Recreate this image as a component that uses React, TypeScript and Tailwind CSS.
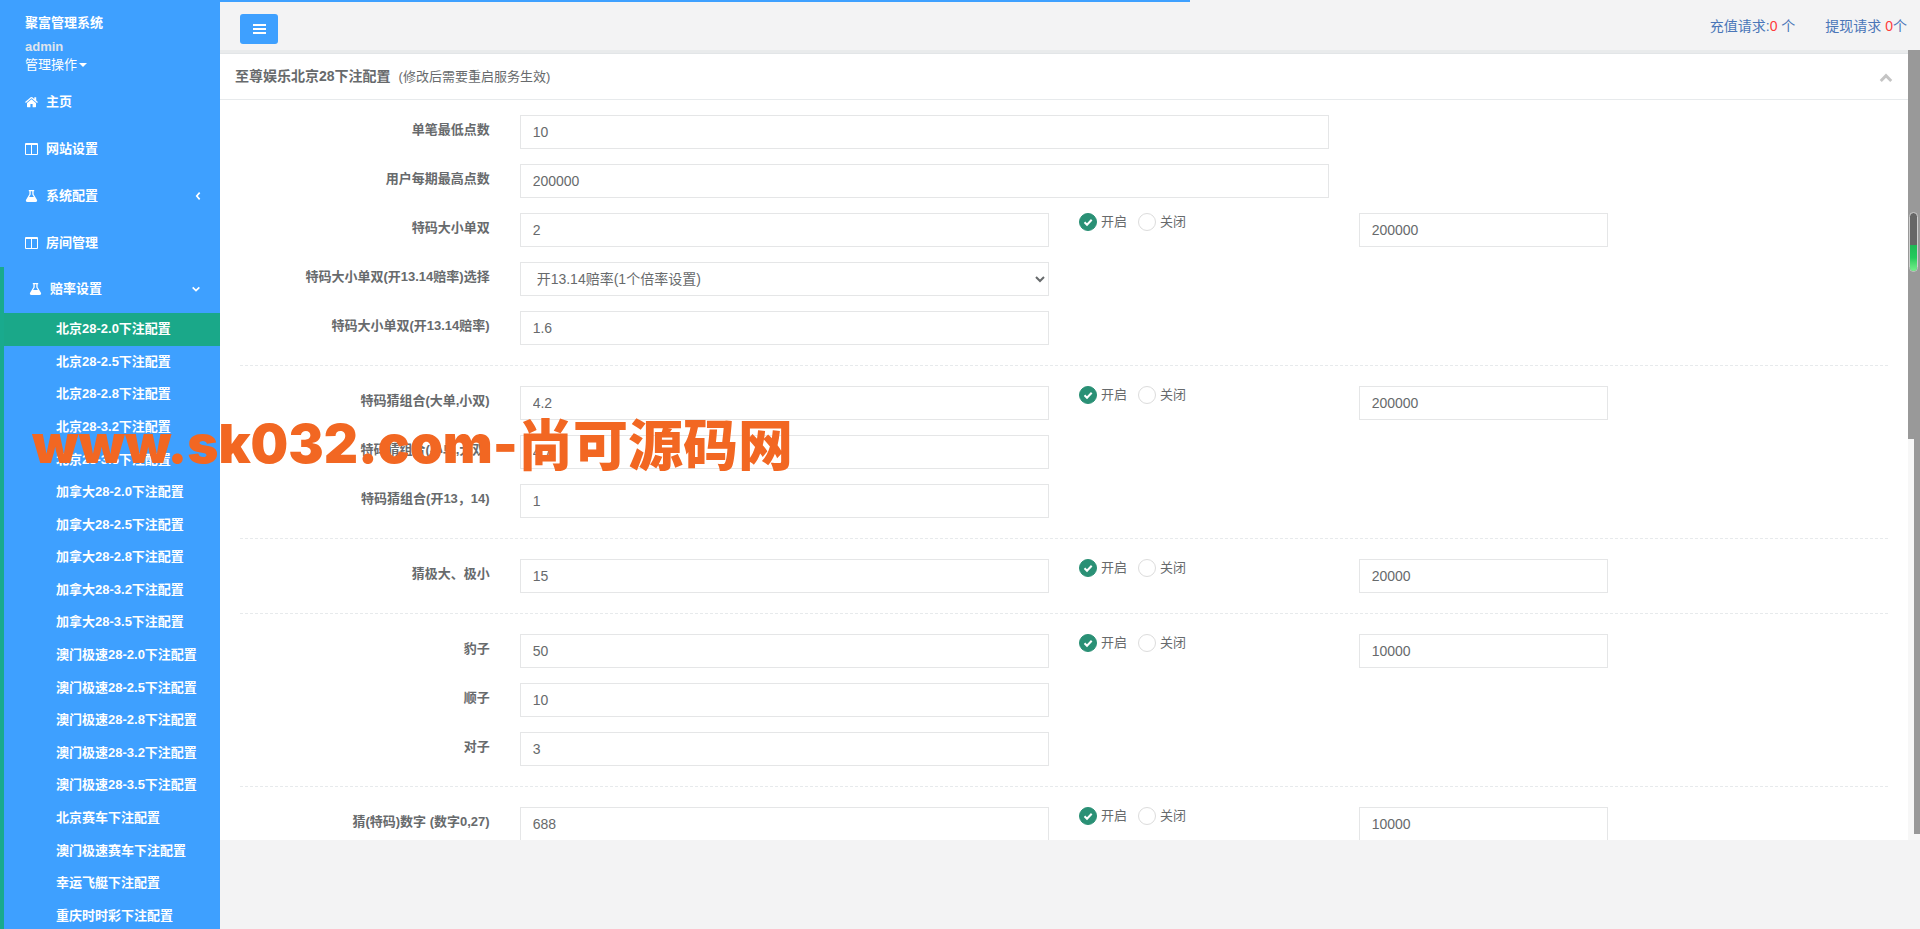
import type { ReactNode } from 'react';

const SUB_LINKS = [
  '北京28-2.0下注配置',
  '北京28-2.5下注配置',
  '北京28-2.8下注配置',
  '北京28-3.2下注配置',
  '北京28-3.5下注配置',
  '加拿大28-2.0下注配置',
  '加拿大28-2.5下注配置',
  '加拿大28-2.8下注配置',
  '加拿大28-3.2下注配置',
  '加拿大28-3.5下注配置',
  '澳门极速28-2.0下注配置',
  '澳门极速28-2.5下注配置',
  '澳门极速28-2.8下注配置',
  '澳门极速28-3.2下注配置',
  '澳门极速28-3.5下注配置',
  '北京赛车下注配置',
  '澳门极速赛车下注配置',
  '幸运飞艇下注配置',
  '重庆时时彩下注配置',
];

type Row = {
  id: string;
  label: string;
  value: string;
  wide?: boolean;
  select?: boolean;
  limit?: string;
};

const GROUPS: Row[][] = [
  [
    { id: 'min-bet', label: '单笔最低点数', value: '10', wide: true },
    { id: 'max-bet', label: '用户每期最高点数', value: '200000', wide: true },
    { id: 'dxds', label: '特码大小单双', value: '2', limit: '200000' },
    { id: 'dxds-mode', label: '特码大小单双(开13.14赔率)选择', value: '开13.14赔率(1个倍率设置)', select: true },
    { id: 'dxds-1314', label: '特码大小单双(开13.14赔率)', value: '1.6' },
  ],
  [
    { id: 'combo-a', label: '特码猜组合(大单,小双)', value: '4.2', limit: '200000' },
    { id: 'combo-b', label: '特码猜组合(小单,大双)', value: '4.7' },
    { id: 'combo-1314', label: '特码猜组合(开13，14)', value: '1' },
  ],
  [{ id: 'extreme', label: '猜极大、极小', value: '15', limit: '20000' }],
  [
    { id: 'baozi', label: '豹子', value: '50', limit: '10000' },
    { id: 'shunzi', label: '顺子', value: '10' },
    { id: 'duizi', label: '对子', value: '3' },
  ],
  [{ id: 'num-0-27', label: '猜(特码)数字 (数字0,27)', value: '688', limit: '10000' }],
];

const FIELD = 'block h-[34px] w-full border border-[#e5e6e7] bg-white text-[14px] text-[#676a6c] outline-none';

function HomeIcon() {
  return (
    <svg viewBox="0 0 13 12" className="h-3 w-[13px]" fill="currentColor" aria-hidden="true">
      <path d="M6.5 3.2 2 6.900V10.800c0 .3.2.5.5.5h2.900V8h2.200v3.300h2.900c.3 0 .5-.2.5-.5V6.900z" />
      <path d="M12.900 6 11.200 4.500V1.200H9.300v1.700L7.300 1.200a1.300 1.300 0 0 0-1.600 0L.1 6l.8 1L6.500 2.300 12.100 7z" />
    </svg>
  );
}

function ColumnsIcon() {
  return (
    <svg viewBox="0 0 13 12" className="h-3 w-[13px]" fill="currentColor" aria-hidden="true">
      <path fillRule="evenodd" d="M1 0h11a1 1 0 0 1 1 1v10a1 1 0 0 1-1 1H1a1 1 0 0 1-1-1V1a1 1 0 0 1 1-1zm0 2v9h5V2zm6 0v9h5V2z" />
    </svg>
  );
}

function FlaskIcon() {
  return (
    <svg viewBox="0 0 13 12" className="h-3 w-[13px]" fill="currentColor" aria-hidden="true">
      <path
        fillRule="evenodd"
        d="M3.800 0h5.400v1.200h-.6v3l3.200 5.300c.8 1.300.2 2.500-1.300 2.500h-8c-1.500 0-2.100-1.200-1.300-2.500L4.400 4.200v-3h-.6zm1.900 1.200v3.300L4.100 7h4.800L7.300 4.500V1.200z"
      />
    </svg>
  );
}

function Chevron({ d, className }: { d: string; className: string }) {
  return (
    <svg viewBox="0 0 12 12" className={className} fill="none" stroke="currentColor" aria-hidden="true">
      <path d={d} />
    </svg>
  );
}

function MenuLink({ icon, label, arrow }: { icon: ReactNode; label: string; arrow?: ReactNode }) {
  return (
    <a href="#" className="flex items-center pt-[13px] pb-[15px] pr-5 pl-[25px] leading-[18px] font-bold">
      {icon}
      <span className="ml-2 grow">{label}</span>
      {arrow}
    </a>
  );
}

function Sidebar() {
  return (
    <nav className="w-[220px] shrink-0 overflow-hidden bg-[#3ea0ff] text-[13px] text-white" aria-label="主菜单">
      <div className="flex h-20 flex-col pt-[13px] pl-[25px]">
        <strong className="leading-[19px]">聚富管理系统</strong>
        <strong className="mt-[6px] leading-[18px] text-[#dfe4ed]">admin</strong>
        <button type="button" className="flex items-center leading-[18px]">
          管理操作
          <span className="ml-[2px] border-x-4 border-t-4 border-x-transparent border-t-white" />
        </button>
      </div>
      <div className="grid min-h-[187px] auto-rows-fr">
        <MenuLink icon={<HomeIcon />} label="主页" />
        <MenuLink icon={<ColumnsIcon />} label="网站设置" />
        <MenuLink
          icon={<FlaskIcon />}
          label="系统配置"
          arrow={<Chevron d="M8 2 4.500 6 8 10" className="-mr-[3px] h-[10px] w-[10px] stroke-[2]" />}
        />
        <MenuLink icon={<ColumnsIcon />} label="房间管理" />
      </div>
      <div className="border-l-4 border-[#19aa8d]">
        <MenuLink
          icon={<FlaskIcon />}
          label="赔率设置"
          arrow={<Chevron d="M2 4 6 8 10 4" className="-mr-px h-[10px] w-[10px] stroke-[2]" />}
        />
        <ul className="grid min-h-[619px] auto-rows-fr">
          {SUB_LINKS.map((label, i) => (
            <li key={label} className={i === 0 ? 'bg-[#1aa889]' : undefined}>
              <a href="#" className="flex h-full items-center pl-[52px] leading-[18px] font-bold">
                {label}
              </a>
            </li>
          ))}
        </ul>
      </div>
    </nav>
  );
}

function Header() {
  return (
    <header className="flex h-[51px] items-start justify-between pl-5">
      <button
        type="button"
        aria-label="切换菜单"
        className="mt-[14px] flex h-[30px] w-[38px] flex-col items-center justify-center gap-[2px] rounded-[3px] bg-[#3ea0ff]"
      >
        <span className="h-[2px] w-[13px] bg-white" />
        <span className="h-[2px] w-[13px] bg-white" />
        <span className="h-[2px] w-[13px] bg-white" />
      </button>
      <div className="mt-4 flex gap-[30px] pr-[13px] text-[14px] leading-5 text-[#4a76b8]">
        <a href="#">
          充值请求:<span className="text-[#ff3b3b]">0</span> 个
        </a>
        <a href="#">
          提现请求 <span className="text-[#ff3b3b]">0</span>个
        </a>
      </div>
    </header>
  );
}

function Radio({ name, label, checked }: { name: string; label: string; checked?: boolean }) {
  return (
    <label className="flex items-center gap-1 leading-[18px]">
      <span className="relative block h-[18px] w-[18px]">
        <input
          type="radio"
          name={name}
          defaultChecked={checked}
          className="peer block h-[18px] w-[18px] appearance-none rounded-full border border-[#dcdcdc] bg-white checked:border-[#2a9075] checked:bg-[#2a9075]"
        />
        <svg
          viewBox="0 0 18 18"
          className="pointer-events-none absolute inset-0 hidden peer-checked:block"
          fill="none"
          stroke="#fff"
          strokeWidth="2"
          aria-hidden="true"
        >
          <path d="M5.500 9.200 8 11.700l4.700-5" />
        </svg>
      </span>
      {label}
    </label>
  );
}

function FormRow({ row }: { row: Row }) {
  return (
    <div className="-mx-[15px] grid grid-cols-12">
      <label htmlFor={row.id} className="col-span-2 px-[15px] pt-[6px] text-right leading-[18px] font-bold">
        {row.label}
      </label>
      <div className={row.wide ? 'col-span-6 px-[15px]' : 'col-span-4 px-[15px]'}>
        {row.select ? (
          <select id={row.id} className={`${FIELD} px-3`}>
            <option>{row.value}</option>
          </select>
        ) : (
          <input id={row.id} type="text" defaultValue={row.value} className={`${FIELD} px-3`} />
        )}
      </div>
      {row.limit && (
        <>
          <div className="col-span-2 flex items-start gap-[11px] px-[15px]">
            <Radio name={row.id} label="开启" checked />
            <Radio name={row.id} label="关闭" />
          </div>
          <div className="col-span-2 px-[15px]">
            <input type="text" aria-label={`${row.label}上限`} defaultValue={row.limit} className={`${FIELD} px-3`} />
          </div>
        </>
      )}
    </div>
  );
}

function ConfigPanel() {
  return (
    <main className="min-w-0 grow overflow-hidden bg-white">
      <div className="flex h-[45px] items-center justify-between border-b border-[#e7eaec] px-[15px]">
        <h1 className="flex items-baseline gap-2 text-[14px] font-bold">
          至尊娱乐北京28下注配置
          <small className="text-[13px] font-normal">(修改后需要重启服务生效)</small>
        </h1>
        <button type="button" aria-label="收起" className="pt-[2px] text-[#c4c4c4]">
          <Chevron d="M1.500 8.500 6 4l4.500 4.500" className="h-[14px] w-[14px] stroke-[2.500]" />
        </button>
      </div>
      <form className="px-5 pt-[15px]">
        {GROUPS.map((rows, i) => (
          <div
            key={rows[0].id}
            className={
              i === 0
                ? 'flex flex-col gap-[15px] pb-5'
                : 'flex flex-col gap-[15px] border-t border-dashed border-[#e7eaec] py-5'
            }
          >
            {rows.map((row) => (
              <FormRow key={row.id} row={row} />
            ))}
          </div>
        ))}
      </form>
    </main>
  );
}

export default function App() {
  return (
    <div className="relative flex h-screen overflow-hidden bg-[#f3f3f4] font-['Liberation_Sans','Noto_Sans_CJK_SC',sans-serif] text-[13px] text-[#676a6c]">
      {/* Page load progress */}
      <div className="absolute top-0 left-0 h-[2px] w-[62%] bg-[#3ea0ff]" />

      <Sidebar />

      <div className="flex min-w-0 grow flex-col">
        <Header />
        <div className="mb-[89px] flex min-h-0 grow">
          <div className="flex min-w-0 grow flex-col">
            <div className="h-1 shrink-0 border-b border-[#e2e5e7] bg-[#e9ebec]" />
            <div className="flex min-h-0 grow bg-white pt-px">
              <ConfigPanel />
            </div>
          </div>
          {/* Scroll tracks */}
          <div className="relative flex w-3 shrink-0 flex-col items-end bg-[#f7f7f7]">
            <div className="h-[389px] w-3 bg-[#999999]" />
            <div className="mb-[6px] w-[6px] grow bg-[#999999]" />
            <div className="absolute top-[162px] left-px flex h-[60px] w-[9px] flex-col justify-end overflow-hidden rounded-full border border-[#cfcfcf] bg-[#666666]">
              <div className="h-[26px] bg-linear-to-b from-[#1fb855] via-[#22cc5c] to-[#74f08c]" />
            </div>
          </div>
        </div>
      </div>

      <div className="pointer-events-none absolute top-[408px] left-8 flex items-start whitespace-nowrap text-[#f26722]">
        <span className="font-['Inter',sans-serif] text-[53px] leading-[72px] font-black">www.sk032.com-</span>
        <span className="font-['Noto_Sans_CJK_SC',sans-serif] text-[55px] leading-[66px] font-black">尚可源码网</span>
      </div>
    </div>
  );
}
